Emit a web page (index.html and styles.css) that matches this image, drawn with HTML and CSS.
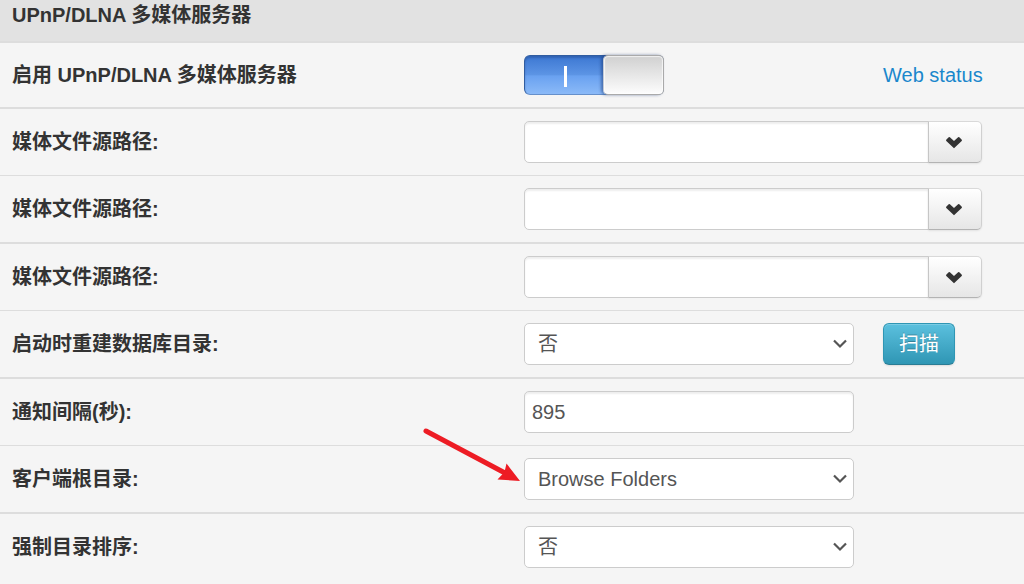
FILE: index.html
```html
<!DOCTYPE html>
<html lang="zh-CN">
<head>
<meta charset="utf-8">
<meta name="viewport" content="width=device-width, initial-scale=1">
<title>UPnP/DLNA 多媒体服务器</title>
<link rel="stylesheet" href="styles.css">
</head>
<body>
<svg class="defs" aria-hidden="true">
  <symbol id="chevron" viewBox="0 0 18 13"><path d="M1.200 3.800 3.700 1.200Q4.300.8 4.900 1.300L9 5.100 13.100 1.300Q13.700.8 14.300 1.200L16.800 3.800Q17.200 4.500 16.700 5.100L9 12.300 1.300 5.100Q.8 4.500 1.200 3.800Z" fill="#333"/></symbol>
  <symbol id="caret" viewBox="0 0 14 10"><path d="M1 1.500 7 7.500 13 1.500" fill="none" stroke="#555" stroke-width="2.200"/></symbol>
</svg>
<form class="settings">
  <h2 class="heading">UPnP/DLNA 多媒体服务器</h2>
  <div class="row">
    <label class="label" for="enable">启用 UPnP/DLNA 多媒体服务器</label>
    <div class="cell">
      <div class="field"><input class="switch" type="checkbox" id="enable" checked></div>
      <a class="link" href="#status">Web status</a>
    </div>
  </div>
  <div class="row">
    <label class="label" for="path1">媒体文件源路径:</label>
    <div class="cell"><div class="combo">
      <input class="control combo-input" type="text" id="path1">
      <button class="combo-button" type="button" aria-label="选择路径"><svg class="chevron"><use href="#chevron"/></svg></button>
    </div></div>
  </div>
  <div class="row">
    <label class="label" for="path2">媒体文件源路径:</label>
    <div class="cell"><div class="combo">
      <input class="control combo-input" type="text" id="path2">
      <button class="combo-button" type="button" aria-label="选择路径"><svg class="chevron"><use href="#chevron"/></svg></button>
    </div></div>
  </div>
  <div class="row">
    <label class="label" for="path3">媒体文件源路径:</label>
    <div class="cell"><div class="combo">
      <input class="control combo-input" type="text" id="path3">
      <button class="combo-button" type="button" aria-label="选择路径"><svg class="chevron"><use href="#chevron"/></svg></button>
    </div></div>
  </div>
  <div class="row">
    <label class="label" for="rebuild">启动时重建数据库目录:</label>
    <div class="cell">
      <div class="field">
        <select class="control select" id="rebuild"><option>否</option><option>是</option></select>
        <svg class="caret"><use href="#caret"/></svg>
      </div>
      <button class="scan" type="button">扫描</button>
    </div>
  </div>
  <div class="row">
    <label class="label" for="interval">通知间隔(秒):</label>
    <div class="cell"><div class="field"><input class="control" type="text" id="interval" value="895"></div></div>
  </div>
  <div class="row">
    <label class="label" for="root">客户端根目录:</label>
    <div class="cell">
      <div class="field">
        <select class="control select" id="root"><option>Browse Folders</option></select>
        <svg class="caret"><use href="#caret"/></svg>
        <svg class="pointer" viewBox="0 0 100 60" aria-hidden="true">
          <path d="M6 5 85 47" fill="none" stroke="#ed1c24" stroke-width="5" stroke-linecap="round"/>
          <path d="M100 55 86.500 37.500 84.500 46 77.500 53.500Z" fill="#ed1c24"/>
        </svg>
      </div>
    </div>
  </div>
  <div class="row">
    <label class="label" for="sort">强制目录排序:</label>
    <div class="cell">
      <div class="field">
        <select class="control select" id="sort"><option>否</option><option>是</option></select>
        <svg class="caret"><use href="#caret"/></svg>
      </div>
    </div>
  </div>
</form>
</body>
</html>
```

FILE: styles.css
```css
* { box-sizing: border-box; }

body {
  margin: 0;
  background: #f5f5f5;
  color: #333;
  font: 20px/30px "Liberation Sans", Arial, "Noto Sans CJK SC", sans-serif;
}

.defs { display: none; }

.heading {
  margin: 0;
  padding: 0 12px 11px;
  border-bottom: 2px solid #ddd;
  background: #e2e2e2;
  font-size: 20px;
  line-height: 30px;
}

.row {
  display: grid;
  grid-template-columns: 1fr 1fr;
  align-items: center;
  border-bottom: 2px solid #ddd;
}
.row:nth-child(odd) { border-bottom-width: 1px; }
.row:last-child { border-bottom: 0; }

.label { padding: 0 12px; font-weight: bold; }

.cell {
  display: flex;
  align-items: center;
  gap: 29px;
  padding: 12px;
}

.field { position: relative; display: flex; flex: 0 1 330px; min-width: 0; }

.control {
  width: 100%;
  height: 42px;
  margin: 0;
  padding: 0 7px;
  border: 1px solid #ccc;
  border-radius: 5px;
  background: #fff;
  box-shadow: inset 0 2px 2px rgba(0, 0, 0, .07);
  color: #555;
  font: inherit;
}

.select { appearance: none; padding: 0 32px 0 13px; box-shadow: none; }

.caret {
  position: absolute;
  top: 16px;
  right: 7px;
  width: 14px;
  height: 10px;
  pointer-events: none;
}

.combo { display: flex; flex: 0 1 458px; min-width: 0; }
.combo-input { flex: 1; min-width: 0; border-radius: 5px 0 0 5px; }

.combo-button {
  display: flex;
  align-items: center;
  justify-content: center;
  width: 54px;
  height: 42px;
  margin-left: -1px;
  padding: 0 2px 0 0;
  flex: none;
  border: 1px solid #ccc;
  border-color: #d9d9d9 #d0d0d0 #b3b3b3 #c6c6c6;
  border-radius: 0 5px 5px 0;
  background: linear-gradient(#fff, #e6e6e6);
  box-shadow: 0 1px 2px rgba(0, 0, 0, .08);
}
.chevron { width: 18px; height: 13px; }

.switch {
  appearance: none;
  position: relative;
  width: 140px;
  height: 40px;
  margin: 0;
  border: 1px solid #315da0;
  border-bottom-color: #6690cb;
  border-radius: 6px;
  background:
    linear-gradient(#fff, #fff) 39px 10px / 3px 21px no-repeat,
    linear-gradient(#3c77d2, #5d95e5 50%, #69a1f0 52%, #8bbaf8);
  box-shadow: inset 0 2px 2px rgba(20, 50, 110, .3);
}
.switch::after {
  content: "";
  position: absolute;
  inset: -1px -1px -1px auto;
  width: 59px;
  border: 1px solid #aaa;
  border-left-color: #c4cad4;
  border-radius: 5px;
  background: linear-gradient(#d0d0d0, #fdfdfd);
  box-shadow: inset 0 0 1px 1px rgba(255, 255, 255, .7), -2px 0 3px rgba(20, 50, 110, .5);
}

.link { color: #1a87cc; text-decoration: none; white-space: nowrap; }

.scan {
  height: 42px;
  padding: 0 15px;
  border: 1px solid #2f96b4;
  border-bottom-color: #2a7c94;
  border-radius: 6px;
  background: linear-gradient(#5bc0de, #2f96b4);
  box-shadow: inset 0 1px 0 rgba(255, 255, 255, .2), 0 1px 2px rgba(0, 0, 0, .1);
  color: #fff;
  font: inherit;
  text-shadow: 0 -1px 0 rgba(0, 0, 0, .25);
  white-space: nowrap;
}

.pointer {
  position: absolute;
  top: -32px;
  right: calc(100% + 4px);
  width: 100px;
  height: 60px;
  pointer-events: none;
}
```
